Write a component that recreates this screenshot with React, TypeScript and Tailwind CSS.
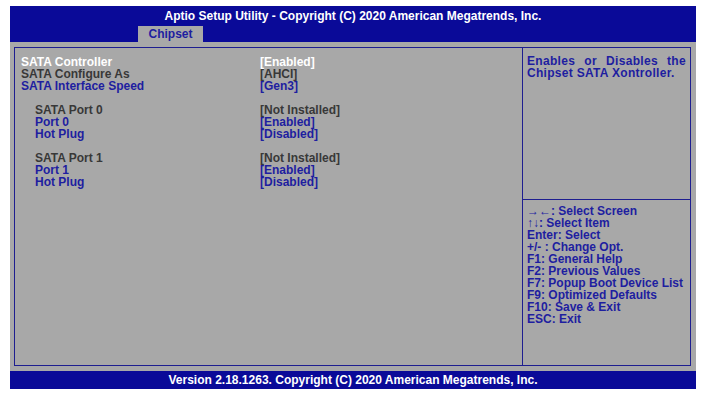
import React from "react";

const BLUE = "text-[#1e1ea0]";
const GRAY = "text-[#383838]";
const WHITE = "text-white";

type Row = { label: string; value?: string; lc: string; vc: string; indent?: boolean } | null;

const rows: Row[] = [
  { label: "SATA Controller", value: "[Enabled]", lc: WHITE, vc: WHITE },
  { label: "SATA Configure As", value: "[AHCI]", lc: GRAY, vc: GRAY },
  { label: "SATA Interface Speed", value: "[Gen3]", lc: BLUE, vc: BLUE },
  null,
  { label: "SATA Port 0", value: "[Not Installed]", lc: GRAY, vc: GRAY, indent: true },
  { label: "Port 0", value: "[Enabled]", lc: BLUE, vc: BLUE, indent: true },
  { label: "Hot Plug", value: "[Disabled]", lc: BLUE, vc: BLUE, indent: true },
  null,
  { label: "SATA Port 1", value: "[Not Installed]", lc: GRAY, vc: GRAY, indent: true },
  { label: "Port 1", value: "[Enabled]", lc: BLUE, vc: BLUE, indent: true },
  { label: "Hot Plug", value: "[Disabled]", lc: BLUE, vc: BLUE, indent: true },
];

const help = [
  "\u2192\u2190: Select Screen",
  "\u2191\u2193: Select Item",
  "Enter: Select",
  "+/- : Change Opt.",
  "F1: General Help",
  "F2: Previous Values",
  "F7: Popup Boot Device List",
  "F9: Optimized Defaults",
  "F10: Save & Exit",
  "ESC: Exit",
];

export default function App() {
  return (
    <div className="w-[701px] h-[393px] bg-white overflow-hidden pt-[6px] pl-[10px]" style={{ fontFamily: '"Liberation Sans", Arial, sans-serif' }}>
      <div className="w-[686px] flex flex-col font-bold text-[12px] leading-[12px]">
        {/* header */}
        <div className="h-[36px] bg-[#0a0a98] flex flex-col">
          <div className="h-[20px] flex items-center justify-center text-white">
            Aptio Setup Utility - Copyright (C) 2020 American Megatrends, Inc.
          </div>
          <div className="flex-1 flex items-end pl-[128px]">
            <div className="w-[65px] h-[16px] bg-[#a8a8a8] text-[#1e1ea0] flex items-center justify-center">Chipset</div>
          </div>
        </div>
        {/* body */}
        <div className="h-[329px] bg-[#a8a8a8] pt-[5px] pl-[4px] pr-[5px] pb-[5px]">
          <div className="h-full border border-[#1e1e90] flex">
            <div className="w-[508px] border-r border-[#1e1e90] pt-[8px] flex flex-col">
              {rows.map((r, i) =>
                r === null ? (
                  <div key={i} className="h-[12px]" />
                ) : (
                  <div key={i} className="flex h-[12px] items-center">
                    <div className={`${r.indent ? "pl-[20px]" : "pl-[6px]"} w-[245px] ${r.lc}`}>{r.label}</div>
                    <div className={r.vc}>{r.value}</div>
                  </div>
                )
              )}
            </div>
            <div className="flex-1 flex flex-col">
              <div className="h-[152px] border-b border-[#1e1e90] px-[4px] pt-[7px] text-[#1e1ea0] tracking-[0.3px]">
                <div className="flex justify-between"><span>Enables</span><span>or</span><span>Disables</span><span>the</span></div>
                <div>Chipset SATA Xontroller.</div>
              </div>
              <div className="pt-[5px] px-[4px] text-[#1e1ea0] flex flex-col">
                {help.map((h, i) => (
                  <div key={i} className="h-[12px] flex items-center whitespace-nowrap">{h}</div>
                ))}
              </div>
            </div>
          </div>
        </div>
        {/* footer */}
        <div className="h-[18px] bg-[#0a0a98] text-white flex items-center justify-center">
          Version 2.18.1263. Copyright (C) 2020 American Megatrends, Inc.
        </div>
      </div>
    </div>
  );
}
